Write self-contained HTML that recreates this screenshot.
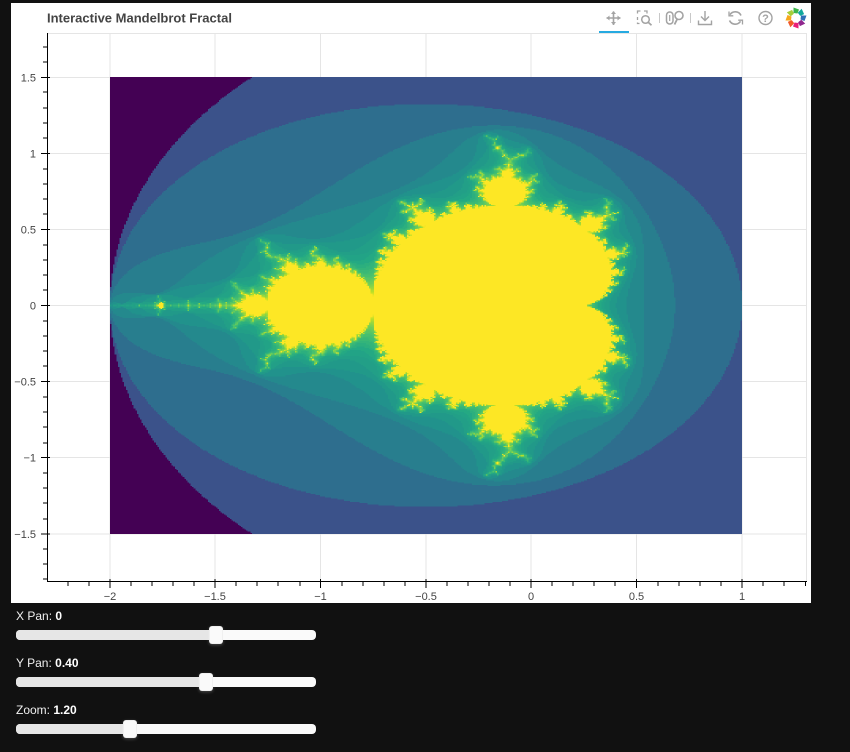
<!DOCTYPE html>
<html><head><meta charset="utf-8"><title>Interactive Mandelbrot Fractal</title>
<style>
html,body{margin:0;padding:0;background:#111;width:850px;height:752px;overflow:hidden;font-family:"Liberation Sans",Arial,sans-serif}
#plot{position:absolute;left:11px;top:3px;width:800px;height:600px;background:#fff}
#frac{position:absolute;left:110px;top:77px;width:632px;height:457px;image-rendering:pixelated}
svg{position:absolute;left:0;top:0}
.lab{position:absolute;left:16px;color:#f0f0f0;font-size:12px;line-height:14px;white-space:nowrap}
.lab b{color:#fff}
.track{position:absolute;left:16px;width:300px;height:10px;background:#fafafa;border-radius:4px;overflow:hidden}
.track i{display:block;height:10px;background:#e6e6e6}
.h{position:absolute;width:14px;height:18px;background:#fafafa;border-radius:3px;box-shadow:0 1px 3px rgba(255,255,255,.25),inset 0 0 1px rgba(0,0,0,.25)}
</style></head><body>
<div id="plot"></div>
<svg width="850" height="752" viewBox="0 0 850 752">
<g stroke="#e5e5e5" stroke-width="1" fill="none" shape-rendering="crispEdges">
<path d="M47 33.5H807M806.5 33V581"/>
<path d="M110 33V581M215 33V581M320.500 33V581M426 33V581M531 33V581M636.500 33V581M742 33V581"/>
<path d="M47 77.500H807M47 153.500H807M47 229.500H807M47 305.500H807M47 381.500H807M47 457.500H807M47 534H807"/>
</g>
<g stroke="#000" stroke-width="1" fill="none" shape-rendering="crispEdges">
<path d="M47.500 33V581.500M47 581.500H807"/>
<path d="M43 47H47M43 62H47M43 92H47M43 108H47M43 123H47M43 138H47M43 169H47M43 184H47M43 199H47M43 214H47M43 245H47M43 260H47M43 275H47M43 290H47M43 321H47M43 336H47M43 351H47M43 366H47M43 397H47M43 412H47M43 427H47M43 443H47M43 473H47M43 488H47M43 503H47M43 519H47M43 549H47M43 564H47M43 579H47"/>
<path d="M41 77.500H50M41 153.500H50M41 229.500H50M41 305.500H50M41 381.500H50M41 457.500H50M41 534H50"/>
<path d="M68 582V586M89 582V586M131 582V586M152 582V586M173 582V586M194 582V586M236 582V586M257 582V586M278 582V586M300 582V586M342 582V586M363 582V586M384 582V586M405 582V586M447 582V586M468 582V586M489 582V586M510 582V586M552 582V586M573 582V586M594 582V586M615 582V586M658 582V586M679 582V586M700 582V586M721 582V586M763 582V586M784 582V586M805.500 582V586"/>
<path d="M110 579V588M215 579V588M320.500 579V588M426 579V588M531 579V588M636.500 579V588M742 579V588"/>
</g>
<g font-family="Liberation Sans" font-size="11" fill="#444" text-anchor="end">
<text x="36" y="81.500">1.5</text><text x="36" y="157.500">1</text><text x="36" y="233.500">0.5</text><text x="36" y="309.500">0</text><text x="36" y="385.500">−0.5</text><text x="36" y="461.500">−1</text><text x="36" y="538">−1.5</text>
</g>
<g font-family="Liberation Sans" font-size="11" fill="#444" text-anchor="middle">
<text x="110" y="600">−2</text><text x="215" y="600">−1.5</text><text x="320.500" y="600">−1</text><text x="426" y="600">−0.5</text><text x="531" y="600">0</text><text x="636.500" y="600">0.5</text><text x="742" y="600">1</text>
</g>
<text x="47" y="22.500" font-family="Liberation Sans" font-size="13" font-weight="700" fill="#444">Interactive Mandelbrot Fractal</text>
<rect x="599" y="31" width="30" height="2" fill="#26aae1"/>
<g fill="none" stroke="#a3a3a3">
<g stroke-width="1.600">
<path d="M613.500 11.500V25M606.500 18H620.500"/>
</g>
<path d="M611 14l2.500-3 2.500 3zM611 22l2.500 3 2.500-3zM609.500 15.500l-3 2.500 3 2.500zM617.500 15.500l3 2.500-3 2.500z" fill="#a3a3a3" stroke="none"/>
<path d="M637.500 13.500v-2.500h3M644 11h3v2.500M637.500 17v3M637.500 22.500v1h2" stroke-width="1.300"/>
<circle cx="645.500" cy="19.500" r="3.800" stroke-width="1.500"/>
<path d="M648.200 22.300l3.300 3" stroke-width="1.700"/>
<path d="M659.500 13v10M690.500 13v10" stroke="#c8c8c8" stroke-width="1"/>
<rect x="666.500" y="12" width="6.500" height="12" rx="3.200" stroke-width="1.500"/>
<path d="M669.700 15v6" stroke-width="1.200"/>
<circle cx="679" cy="15.500" r="4" stroke-width="1.600"/>
<path d="M677 19.500L674.500 24.500" stroke-width="1.800"/>
<path d="M705 11v9M701 16.500l4 4 4-4M698.500 20.500v4h13v-4" stroke-width="1.400"/>
<path d="M741 15.500a6.300 6.300 0 0 0-11-.8M729.500 20.500a6.300 6.300 0 0 0 11 .8" stroke-width="1.600"/>
<path d="M729 11.500v4.300h4.300M742.500 24.500v-4.300h-4.300" stroke-width="1.300"/>
<circle cx="765.500" cy="18" r="6.500" stroke-width="1.400"/>
<text x="765.500" y="22" font-family="Liberation Sans" font-size="11" font-weight="700" fill="#a3a3a3" stroke="none" text-anchor="middle">?</text>
</g>
<g transform="translate(796 18)">
<path id="p" d="M-2.500-10.500L3-8.500 1.500-4.500-2.500-5z" fill="#3cb54a"/>
<path d="M-2.500-10.500L3-8.500 1.500-4.500-2.500-5z" fill="#12a89d" transform="rotate(45)"/>
<path d="M-2.500-10.500L3-8.500 1.500-4.500-2.500-5z" fill="#2f6fb7" transform="rotate(90)"/>
<path d="M-2.500-10.500L3-8.500 1.500-4.500-2.500-5z" fill="#90278e" transform="rotate(135)"/>
<path d="M-2.500-10.500L3-8.500 1.500-4.500-2.500-5z" fill="#e91e79" transform="rotate(180)"/>
<path d="M-2.500-10.500L3-8.500 1.500-4.500-2.500-5z" fill="#f15a29" transform="rotate(225)"/>
<path d="M-2.500-10.500L3-8.500 1.500-4.500-2.500-5z" fill="#f7a81b" transform="rotate(270)"/>
<path d="M-2.500-10.500L3-8.500 1.500-4.500-2.500-5z" fill="#a6ce39" transform="rotate(315)"/>
</g>
</svg>
<canvas id="frac" width="400" height="400"></canvas>
<div class="lab" style="top:609px">X Pan: <b>0</b></div>
<div class="track" style="top:630px"><i style="width:200px"></i></div><div class="h" style="left:209px;top:626px"></div>
<div class="lab" style="top:656px">Y Pan: <b>0.40</b></div>
<div class="track" style="top:677px"><i style="width:190px"></i></div><div class="h" style="left:199px;top:673px"></div>
<div class="lab" style="top:703px">Zoom: <b>1.20</b></div>
<div class="track" style="top:724px"><i style="width:114px"></i></div><div class="h" style="left:123px;top:720px"></div>
<script>
var c=document.getElementById('frac'),g=c.getContext('2d'),W=c.width,H=c.height,im=g.createImageData(W,H);
var S=[[68,1,84],[72,37,118],[65,68,135],[53,95,141],[42,120,142],[33,145,140],[34,168,132],[68,191,112],[122,209,81],[189,223,38],[253,231,37]];
function vir(t){t=Math.max(0,Math.min(1,t))*10;var i=Math.min(9,Math.floor(t)),f=t-i;return [0,1,2].map(function(k){return S[i][k]+(S[i+1][k]-S[i][k])*f;});}
var N=50,i=0;
for(var y=0;y<H;y++){var ci=1.5-3*(y+.5)/H;for(var x=0;x<W;x++){var cr=-2+3*(x+.5)/W,zr=0,zi=0,n=0;
while(n<N){var a=zr*zr-zi*zi+cr;zi=2*zr*zi+ci;zr=a;if(zr*zr+zi*zi>4)break;n++;}
var t=n==0?0:(n>=N?1:(n<=8?.25+.11*Math.log2(n):.58+.155*Math.log2(n/8)));
var col=vir(t);im.data[i++]=col[0];im.data[i++]=col[1];im.data[i++]=col[2];im.data[i++]=255;}}
g.putImageData(im,0,0);
</script>
</body></html>
